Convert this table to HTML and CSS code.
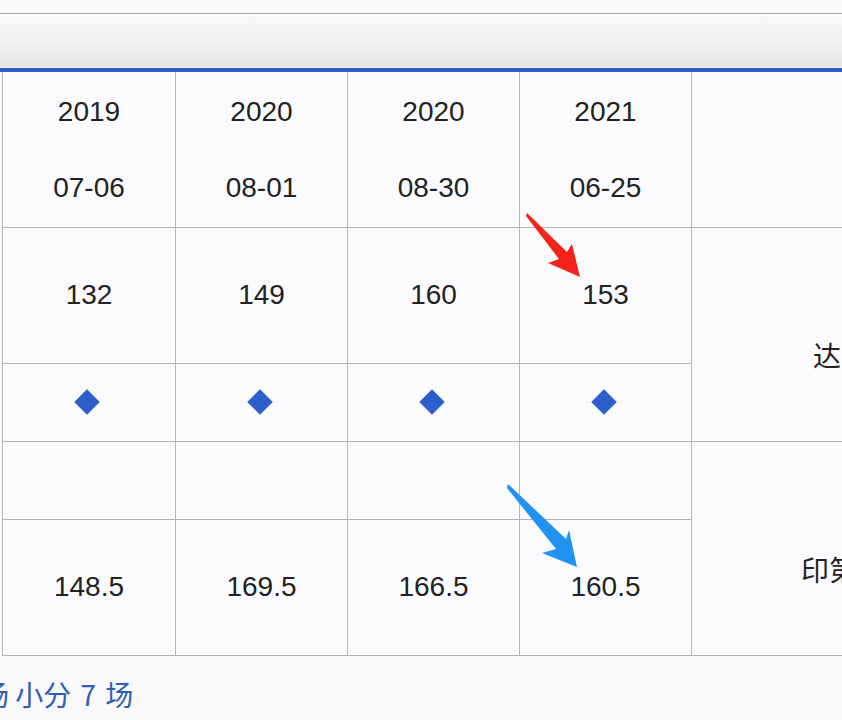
FILE: index.html
```html
<!DOCTYPE html>
<html lang="zh">
<head>
<meta charset="utf-8">
<link rel="stylesheet" href="styles.css">
</head>
<body>
<div class="page">
  <div class="topbar"></div>
  <div class="blueline"></div>
  <div class="grid">
    <div class="cell head"><span>2019</span><span>07-06</span></div>
    <div class="cell head"><span>2020</span><span>08-01</span></div>
    <div class="cell head"><span>2020</span><span>08-30</span></div>
    <div class="cell head"><span>2021</span><span>06-25</span></div>
    <div class="cell side r1"></div>

    <div class="cell num">132</div>
    <div class="cell num">149</div>
    <div class="cell num">160</div>
    <div class="cell num">153</div>
    <div class="cell side r2 team1">达拉斯独行侠</div>

    <div class="cell"><i class="diamond"></i></div>
    <div class="cell"><i class="diamond"></i></div>
    <div class="cell"><i class="diamond"></i></div>
    <div class="cell"><i class="diamond"></i></div>

    <div class="cell"></div>
    <div class="cell"></div>
    <div class="cell"></div>
    <div class="cell"></div>
    <div class="cell side r4 team2">印第安纳步行者</div>

    <div class="cell num">148.5</div>
    <div class="cell num">169.5</div>
    <div class="cell num">166.5</div>
    <div class="cell num">160.5</div>
  </div>
  <p class="note">主场 小分 <span class="seven">7</span> 场</p>

  <svg class="arrows" width="842" height="720" viewBox="0 0 842 720">
    <polygon fill="#f2231b" points="527,213 567,252 572,244 580,277 548,263 559,259 526,216"/>
    <polygon fill="#1f92f2" points="508,484 566,539 569,530 577,567 542,553 556,549 507,488"/>
  </svg>
</div>
</body>
</html>
```

FILE: styles.css
```css
html, body {
  margin: 0;
  padding: 0;
  background: #fafafc;
  overflow: hidden;
}

.page {
  position: relative;
  width: 842px;
  height: 720px;
  overflow: hidden;
  padding-top: 13px;
  box-sizing: border-box;
  font-family: "Liberation Sans", "Noto Sans CJK SC", sans-serif;
  color: #222;
}

.topbar {
  height: 53px;
  border-top: 1px solid #a9a9a9;
  background: linear-gradient(to bottom, #fafafa 0%, #f1f1f1 55%, #e6e6e6 100%);
  border-bottom: 1px solid #f2f2f2;
}

.blueline {
  height: 4px;
  background: #2a5fc6;
}

.grid {
  display: grid;
  grid-template-columns: 172px 171px 171px 171px 1fr;
  grid-template-rows: 155px 135px 77px 77px 135px;
  gap: 1px;
  padding: 0 0 1px 1px;
  margin-left: 2px;
  background: #b4b4b6;
}

.cell {
  background: #fbfbfd;
  display: flex;
  align-items: center;
  justify-content: center;
  font-size: 28px;
  overflow: hidden;
  white-space: nowrap;
}

.head {
  flex-direction: column;
  line-height: 76px;
}

.num {
  padding-bottom: 2px;
}

.side {
  grid-column: 5;
  justify-content: flex-start;
  font-family: "Noto Sans CJK SC", sans-serif;
  padding-top: 40px;
  box-sizing: border-box;
}

.r1 { grid-row: 1; padding-top: 0; }
.r2 { grid-row: 2 / span 2; }
.r4 { grid-row: 4 / span 2; }

.team1 { padding-left: 121px; }
.team2 { padding-left: 109px; }

.diamond {
  display: block;
  width: 18px;
  height: 18px;
  background: #2c5fcb;
  transform: translate(-2px, -1px) rotate(45deg);
}

.note {
  margin: 0;
  height: 64px;
  padding-top: 8px;
  box-sizing: border-box;
  margin-left: -47px;
  line-height: 60px;
  font-family: "Noto Sans CJK SC", sans-serif;
  font-size: 28px;
  color: #2e5db7;
  white-space: nowrap;
}

.seven {
  margin: 0 3px;
}

.arrows {
  position: absolute;
  left: 0;
  top: 0;
  pointer-events: none;
}
```
